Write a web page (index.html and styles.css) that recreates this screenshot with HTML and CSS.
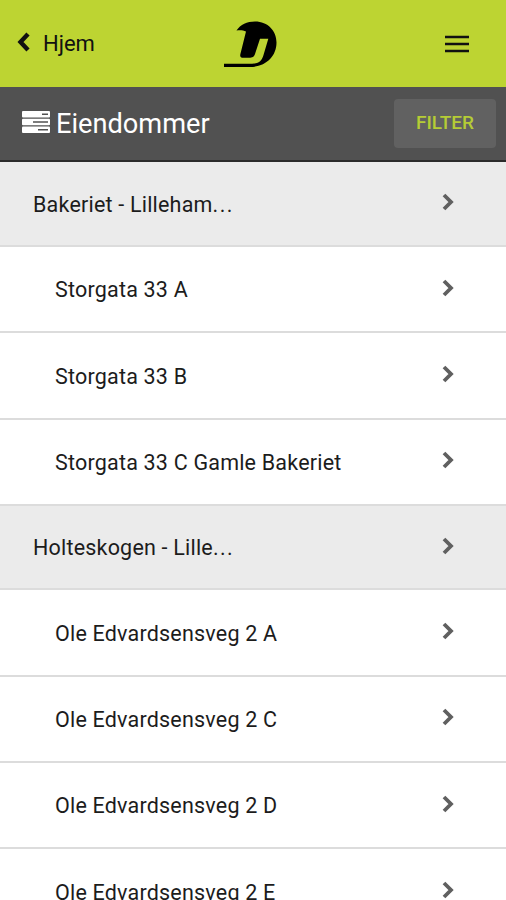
FILE: index.html
```html
<!DOCTYPE html>
<html lang="no">
<head>
    <meta charset="UTF-8">
    <meta name="viewport" content="width=device-width, initial-scale=1.0">
    <title>Eiendommer</title>
    <link rel="stylesheet" href="styles.css">
</head>
<body>
    <svg class="symbols" width="0" height="0">
        <symbol id="chevron" viewBox="0 0 12 18">
            <path d="M2 2 L9 9 L2 16" fill="none" stroke="currentColor" stroke-width="3.8"/>
        </symbol>
    </svg>

    <header class="topbar">
        <a class="back">
            <svg class="back-icon" viewBox="0 0 14 20"><path d="M12 2 L4.5 10 L12 18" fill="none" stroke="currentColor" stroke-width="4.4"/></svg>
            <span>Hjem</span>
        </a>
        <svg class="logo" viewBox="0 0 54 48">
            <path d="M13.5 10.5 C17.5 4.5 24 1.5 32 1.5 C45 1.5 53.5 11 53.5 22.5 C53.5 37 42 47 27 47 H1 V43.7 H29 C36 43.7 39 40.5 40.5 35 L45.3 18.7 H37 L32 34 C31 37 29.5 37.7 26 37.7 H20.5 C17.5 37.7 16.8 36.5 17.4 34 L23 11.5 C20 10 16.5 10 13.5 10.5 Z"/>
        </svg>
        <svg class="menu" viewBox="0 0 24 18"><path d="M0 2 H24 M0 9 H24 M0 16 H24" stroke="currentColor" stroke-width="2.6"/></svg>
    </header>

    <div class="toolbar">
        <svg class="server" viewBox="0 0 28 22">
            <rect width="28" height="6.4" rx="1" fill="#fff"/>
            <rect y="7.8" width="28" height="6.4" rx="1" fill="#fff"/>
            <rect y="15.6" width="28" height="6.4" rx="1" fill="#fff"/>
            <path d="M20 3.2 H26 M11 11 H26 M16 18.8 H26" stroke="#515151" stroke-width="1.4"/>
        </svg>
        <h1>Eiendommer</h1>
        <button class="filter">FILTER</button>
    </div>

    <ul class="list">
        <li class="row group"><span class="name">Bakeriet - Lilleham<span class="dots">...</span></span><svg class="arrow"><use href="#chevron"/></svg></li>
        <li class="row"><span class="name">Storgata 33 A</span><svg class="arrow"><use href="#chevron"/></svg></li>
        <li class="row"><span class="name">Storgata 33 B</span><svg class="arrow"><use href="#chevron"/></svg></li>
        <li class="row"><span class="name">Storgata 33 C Gamle Bakeriet</span><svg class="arrow"><use href="#chevron"/></svg></li>
        <li class="row group"><span class="name">Holteskogen - Lille<span class="dots">...</span></span><svg class="arrow"><use href="#chevron"/></svg></li>
        <li class="row"><span class="name">Ole Edvardsensveg 2 A</span><svg class="arrow"><use href="#chevron"/></svg></li>
        <li class="row"><span class="name">Ole Edvardsensveg 2 C</span><svg class="arrow"><use href="#chevron"/></svg></li>
        <li class="row"><span class="name">Ole Edvardsensveg 2 D</span><svg class="arrow"><use href="#chevron"/></svg></li>
        <li class="row"><span class="name">Ole Edvardsensveg 2 E</span><svg class="arrow"><use href="#chevron"/></svg></li>
    </ul>
</body>
</html>
```
FILE: styles.css
```css
* {
    box-sizing: border-box;
}

body {
    margin: 0;
    height: 100vh;
    overflow: hidden;
    display: flex;
    flex-direction: column;
    font-family: Roboto, sans-serif;
    color: #1c1c1c;
    background: #fff;
}

.symbols {
    display: none;
}

/* Green top bar */
.topbar {
    flex: none;
    height: 87px;
    padding: 0 37px 0 16px;
    display: grid;
    grid-template-columns: 207px 54px 1fr;
    align-items: center;
    background: #bdd432;
    color: #111;
}

.back {
    display: flex;
    align-items: center;
    gap: 13px;
    padding-bottom: 1px;
    font-size: 22px;
}

.back-icon {
    width: 14px;
    height: 20px;
    margin-bottom: 2px;
}

.logo {
    width: 54px;
    height: 48px;
}

.menu {
    width: 24px;
    height: 18px;
    justify-self: end;
}

/* Title bar */
.toolbar {
    flex: none;
    height: 75px;
    padding: 0 10px 0 22px;
    display: flex;
    align-items: center;
    background: #515151;
    border-bottom: 2px solid #2b2b2b;
    color: #fff;
}

.server {
    width: 28px;
    height: 22px;
    margin: 0 6px 3px 0;
}

.toolbar h1 {
    flex: 1;
    margin: 0;
    font-size: 27.2px;
    font-weight: 400;
}

.filter {
    width: 102px;
    height: 49px;
    padding: 0 0 3px;
    border: none;
    border-radius: 4px;
    background: #616161;
    color: #b5cc35;
    font-family: inherit;
    font-size: 19px;
    font-weight: 500;
}

/* Property list */
.list {
    margin: 0;
    padding: 0;
    list-style: none;
}

.row {
    height: 86.3px;
    padding: 0 52px 0 55px;
    display: flex;
    align-items: center;
    justify-content: space-between;
    border-bottom: 2px solid #dcdcdc;
    font-size: 21.5px;
    letter-spacing: 0.2px;
}

.group {
    height: 84.4px;
    padding-left: 33px;
    background: #ebebeb;
}

.group:first-child {
    height: 85.2px;
}

.name {
    padding-top: 1px;
    white-space: nowrap;
}

.dots {
    letter-spacing: 1.4px;
}

.arrow {
    width: 12px;
    height: 18px;
    margin-bottom: 3px;
    color: #606060;
}
```
